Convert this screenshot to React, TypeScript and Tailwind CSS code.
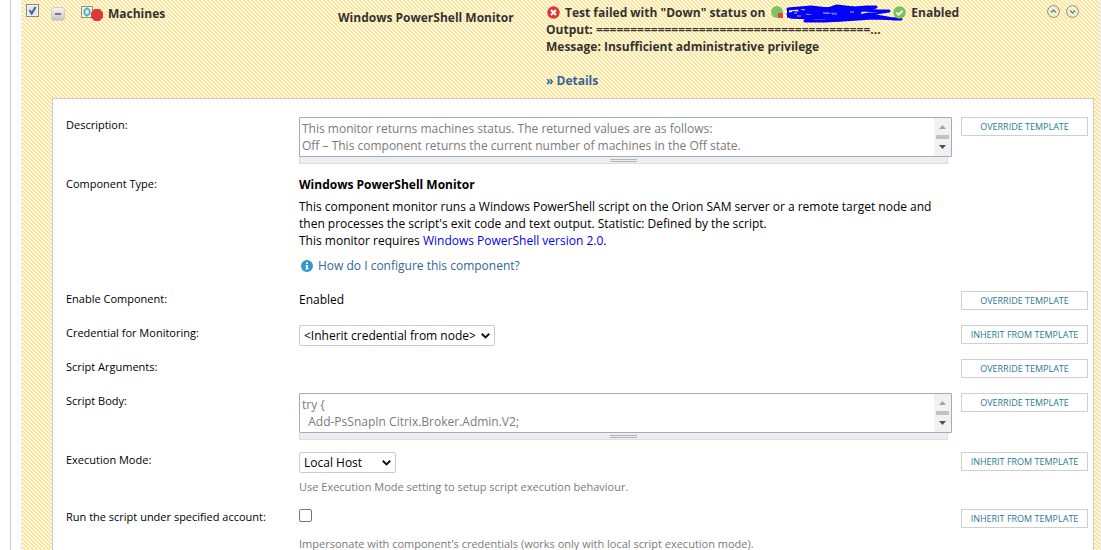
import React from "react";

function OverrideButton({ children }: { children: React.ReactNode }) {
  return (
    <button
      type="button"
      className="h-[19px] w-full self-start border border-[#cfcfcf] bg-white text-[9px] leading-[17px] whitespace-nowrap text-[#297994] uppercase"
    >
      {children}
    </button>
  );
}

type RowProps = {
  label: string;
  htmlFor?: string;
  action?: string;
  children?: React.ReactNode;
};

function Row({ label, htmlFor, action, children }: RowProps) {
  return (
    <div className="grid min-h-[34px] grid-cols-[233px_1fr_127px] pb-3">
      {htmlFor ? (
        <label htmlFor={htmlFor} className="self-start text-[11px] leading-4">
          {label}
        </label>
      ) : (
        <span className="text-[11px] leading-4">{label}</span>
      )}
      <div className="pr-[9px]">{children}</div>
      {action && <OverrideButton>{action}</OverrideButton>}
    </div>
  );
}

function ScriptBox({ id, value }: { id: string; value: string }) {
  return (
    <div>
      <div className="flex h-10 rounded-[1px] border border-[#9aaec5] bg-white">
        <textarea
          id={id}
          readOnly
          defaultValue={value}
          className="min-w-0 flex-1 resize-none overflow-hidden px-[2px] pt-[2px] text-xs leading-[17px] text-[#7b7b7b] outline-none"
        />
        <svg className="h-full w-[17px] bg-[#f1f1f1]" viewBox="0 0 17 38" aria-hidden="true">
          <path d="M5 11h7L8.500 7z" fill="#a3a3a3" />
          <path d="M2 17h13v4H2z" fill="#c1c1c1" />
          <path d="M5 27h7l-3.500 4z" fill="#505050" />
        </svg>
      </div>
      <div className="mr-1 flex h-[7px] flex-col items-center gap-px border border-t-0 border-[#dddddd] bg-[#eeeeee] pt-[2px]">
        <span className="h-px w-[27px] bg-[#b5b5b5]" />
        <span className="h-px w-[27px] bg-[#b5b5b5]" />
      </div>
    </div>
  );
}

function Select({ id, width, option }: { id: string; width: string; option: string }) {
  return (
    <div className={"grid items-center " + width}>
      <select
        id={id}
        className="col-start-1 row-start-1 h-[21px] w-full appearance-none rounded-[2px] border border-[#cccccc] bg-white pl-1 text-xs text-black"
      >
        <option>{option}</option>
      </select>
      <svg
        className="pointer-events-none col-start-1 row-start-1 mr-[5px] h-2 w-[9px] justify-self-end"
        viewBox="0 0 9 8"
        aria-hidden="true"
      >
        <path d="M0.800 1.800l3.700 3.600 3.700-3.600" fill="none" stroke="#111" strokeWidth="2" />
      </svg>
    </div>
  );
}

function RoundArrow({ down = false }: { down?: boolean }) {
  return (
    <button type="button" aria-label={down ? "Move down" : "Move up"} className="size-[13px]">
      <svg viewBox="0 0 13 13" className="size-[13px]" fill="none">
        <circle cx="6.500" cy="6.500" r="5.900" stroke="#8b8b80" />
        <path d={down ? "M4 5.500L6.500 8 9 5.500" : "M4 7.500L6.500 5 9 7.500"} stroke="#2394b5" strokeWidth="1.400" />
      </svg>
    </button>
  );
}

function Header() {
  return (
    <header className="flex h-[98px] items-start text-xs leading-[17px] font-bold text-[#333333]">
      <label className="mt-1 ml-1 grid size-[13px]">
        <input
          type="checkbox"
          defaultChecked
          aria-label="Select Machines"
          className="col-start-1 row-start-1 size-[13px] appearance-none border border-[#858b8b] bg-[#e3e7e9] shadow-[inset_0_0_0_1px_#f5f5f5]"
        />
        <svg viewBox="0 0 13 13" className="pointer-events-none col-start-1 row-start-1" aria-hidden="true">
          <path d="M3.500 6l2.200 3.500L9.500 3" fill="none" stroke="#4661a5" strokeWidth="2" />
        </svg>
      </label>
      <button type="button" aria-label="Collapse" className="mt-[7px] ml-3 size-[14px]">
        <svg viewBox="0 0 14 14" className="size-[14px]">
          <defs>
            <linearGradient id="btn" x1="0" y1="0" x2="0" y2="1">
              <stop offset="0" stopColor="#f6f6f6" />
              <stop offset="1" stopColor="#c3c3c3" />
            </linearGradient>
          </defs>
          <rect x=".5" y=".5" width="13" height="13" rx="2.500" fill="url(#btn)" stroke="#d0d0d0" />
          <path d="M4 6h6v2H4z" fill="#777" />
        </svg>
      </button>
      <svg viewBox="0 0 22 16" className="mt-[6px] ml-4 h-4 w-[22px]" aria-hidden="true">
        <path d="M.5.500h11v11H.5z" fill="#f8f4dc" stroke="#8f9180" />
        <path d="M6 2l2.700 2v4L6 10 3.300 8V4z" fill="#3ba8c8" fillOpacity=".35" stroke="#3ba8c8" strokeWidth="1.300" />
        <circle cx="6" cy="6" r="1.100" fill="#fff" />
        <path d="M13.500 3h5L22 6.500v5L18.500 15h-5L10 11.500v-5z" fill="#df3838" />
      </svg>
      <span className="mt-[5px] ml-[5px] w-[230px]">Machines</span>
      <span className="mt-[9px] w-[208px]">Windows PowerShell Monitor</span>
      <div className="mt-1 flex-1">
        <div className="flex h-[17px] whitespace-nowrap">
          <svg viewBox="0 0 13 13" className="mt-[2px] ml-px size-[13px]" aria-hidden="true">
            <circle cx="6.500" cy="6.500" r="6.200" fill="#db3737" />
            <path d="M4 4l5 5M9 4L4 9" stroke="#fff" strokeWidth="2" />
          </svg>
          <span className="ml-[5px]">Test failed with &quot;Down&quot; status on</span>
          <svg viewBox="0 0 13 13" className="mt-[2px] ml-[6px] size-[13px]" aria-hidden="true">
            <circle cx="6" cy="6" r="6" fill="#7bc465" />
            <path d="M7 7h5v5H7z" fill="#ef4038" />
          </svg>
          <svg viewBox="0 0 118 20" className="ml-px h-5 w-[118px]" aria-hidden="true">
            <g fill="none" stroke="#0202fa" strokeLinecap="round" strokeLinejoin="round">
              <path
                strokeWidth="3"
                d="M3 5L26 3 43 5 52 2 69 4 82 3 91 3 78 6 94 7 104 7 84 10 68 13 91 12 108 15 116 15 88 14 58 16 40 17 20 17 30 13 7 13 3 10 21 8 34 9 48 7 62 8 78 6"
              />
              <path strokeWidth="5" d="M22 5L52 6 68 5 M28 13L58 11 74 8 M6 12L23 13 39 13 52 15 66 14 M50 4L64 5 54 11 73 9" />
              <path strokeWidth="2" d="M3 5v8M8 8l12 2M14 6l18 5M88 12l14 2" />
            </g>
            <path d="M38 9h6M47 10h5M9 9h3M65 8h4M12 12h4" stroke="#d8d8e8" strokeWidth=".8" />
          </svg>
          <svg viewBox="0 0 13 13" className="-ml-[10px] mt-[2px] size-[13px]" aria-hidden="true">
            <circle cx="6.500" cy="6.500" r="6.200" fill="#79c260" />
            <path d="M3.500 6.500l2.200 2.300L9.500 4.600" fill="none" stroke="#fff" strokeWidth="1.700" />
          </svg>
          <span className="ml-[5px]">Enabled</span>
        </div>
        <div className="whitespace-nowrap">Output: ========================================...</div>
        <div>Message: Insufficient administrative privilege</div>
        <a href="#details" className="mt-[17px] block text-[#336699]">
          » Details
        </a>
      </div>
      <div className="mt-[5px] mr-[21px] flex gap-[6px]">
        <RoundArrow />
        <RoundArrow down />
      </div>
    </header>
  );
}

export default function App() {
  return (
    <div className="h-screen overflow-hidden bg-white pl-[10px] font-['Open_Sans',sans-serif] text-xs text-black">
      <div className="min-h-full border-l border-[#cccccc] pl-[10px]">
        <main className="border-x border-[#eeeeee] bg-[linear-gradient(45deg,#ffe38f_25%,#fffbf0_25%,#fffbf0_50%,#ffe38f_50%,#ffe38f_75%,#fffbf0_75%)] bg-[length:4px_4px]">
          <Header />
          <section className="mr-[6px] ml-[30px] border border-[#cccccc] bg-white pt-[18px] pr-[5px] pb-4 pl-[13px]">
            <Row label="Description:" htmlFor="description" action="Override template">
              <ScriptBox
                id="description"
                value={
                  "This monitor returns machines status. The returned values are as follows:\nOff – This component returns the current number of machines in the Off state."
                }
              />
            </Row>
            <Row label="Component Type:">
              <div className="pb-[5px] leading-[17px]">
                <h2 className="font-bold">Windows PowerShell Monitor</h2>
                <p className="mt-[5px] max-w-[640px]">
                  This component monitor runs a Windows PowerShell script on the Orion SAM server or a remote target
                  node and then processes the script&apos;s exit code and text output. Statistic: Defined by the script.
                  <br />
                  This monitor requires{" "}
                  <a href="#powershell" className="text-[#0000ee]">
                    Windows PowerShell version 2.0
                  </a>
                  .
                </p>
                <a href="#configure" className="mt-2 flex items-center gap-[5px] text-[#336699]">
                  <svg viewBox="0 0 12 12" className="ml-[2px] size-3" aria-hidden="true">
                    <circle cx="6" cy="6" r="6" fill="#3498cf" />
                    <path d="M5 2.500h2V4H5zM4.500 5H7v3.500h.6v1H4.500v-1H5V6h-.5z" fill="#fff" />
                  </svg>
                  How do I configure this component?
                </a>
              </div>
            </Row>
            <Row label="Enable Component:" action="Override template">
              <span className="leading-[17px]">Enabled</span>
            </Row>
            <Row label="Credential for Monitoring:" htmlFor="credential" action="Inherit from template">
              <Select id="credential" width="w-[196px]" option="<Inherit credential from node>" />
            </Row>
            <Row label="Script Arguments:" action="Override template" />
            <Row label="Script Body:" htmlFor="body" action="Override template">
              <ScriptBox id="body" value={"try {\n  Add-PsSnapIn Citrix.Broker.Admin.V2;"} />
            </Row>
            <Row label="Execution Mode:" htmlFor="mode" action="Inherit from template">
              <Select id="mode" width="w-[97px]" option="Local Host" />
              <p className="mt-[6px] mb-[2px] text-[11px] leading-4 text-[#7b7b7b]">
                Use Execution Mode setting to setup script execution behaviour.
              </p>
            </Row>
            <Row label="Run the script under specified account:" htmlFor="account" action="Inherit from template">
              <input
                id="account"
                type="checkbox"
                className="block size-[13px] appearance-none rounded-[2px] border border-[#767676] bg-white"
              />
              <p className="mt-[14px] text-[11px] leading-4 text-[#7b7b7b]">
                Impersonate with component&apos;s credentials (works only with local script execution mode).
              </p>
            </Row>
          </section>
        </main>
      </div>
    </div>
  );
}
